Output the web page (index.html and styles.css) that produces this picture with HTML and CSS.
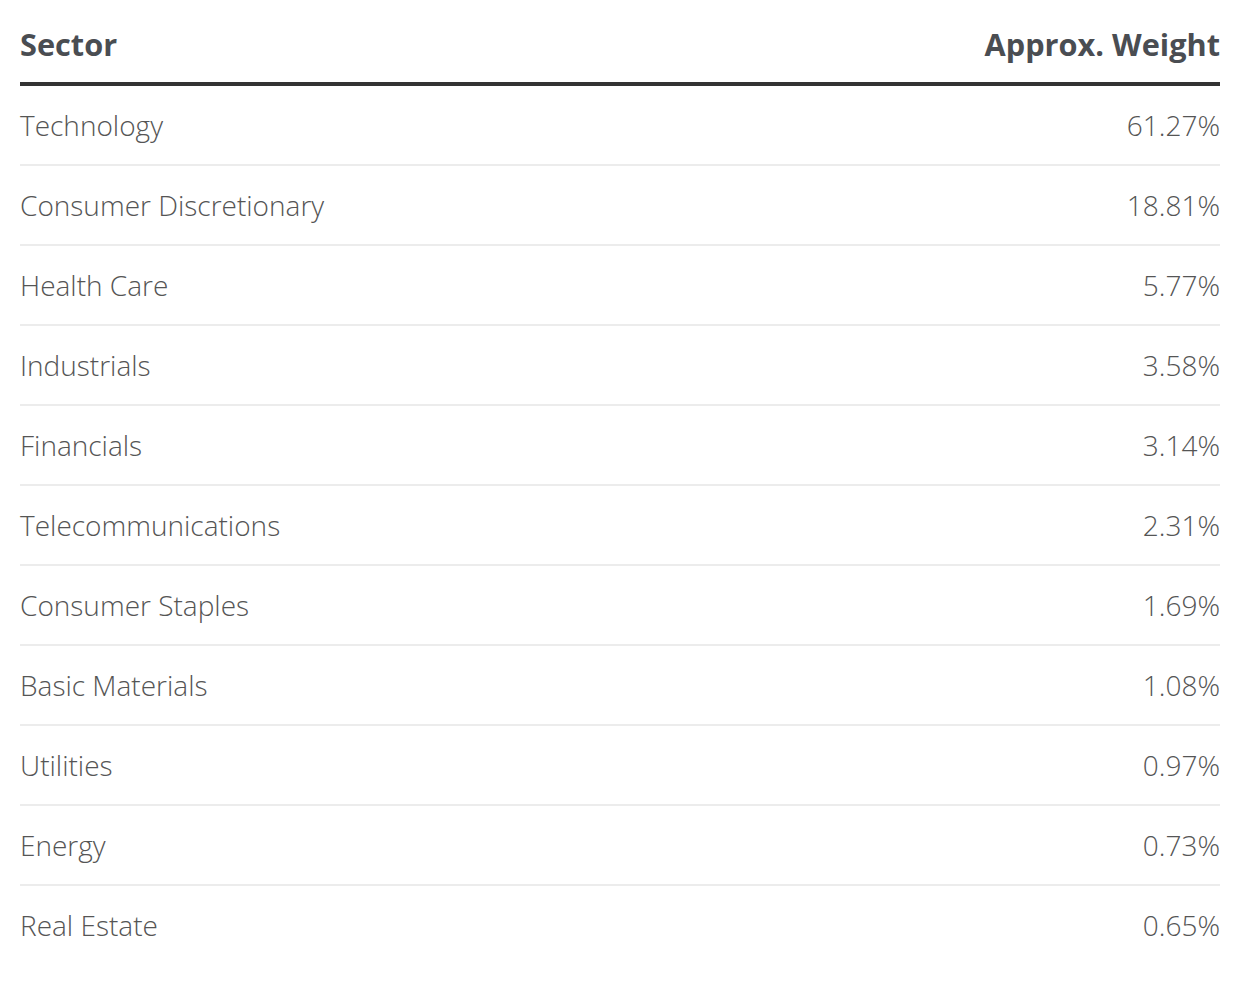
FILE: index.html
```html
<!DOCTYPE html>
<html>
<head>
<meta charset="utf-8">
<link rel="stylesheet" href="styles.css">
</head>
<body>
<div class="wrap">
  <table class="sectors">
    <thead>
      <tr><th class="name">Sector</th><th class="val">Approx. Weight</th></tr>
    </thead>
    <tbody>
      <tr><td class="name">Technology</td><td class="val">61.27%</td></tr>
      <tr><td class="name">Consumer Discretionary</td><td class="val">18.81%</td></tr>
      <tr><td class="name">Health Care</td><td class="val">5.77%</td></tr>
      <tr><td class="name">Industrials</td><td class="val">3.58%</td></tr>
      <tr><td class="name">Financials</td><td class="val">3.14%</td></tr>
      <tr><td class="name">Telecommunications</td><td class="val">2.31%</td></tr>
      <tr><td class="name">Consumer Staples</td><td class="val">1.69%</td></tr>
      <tr><td class="name">Basic Materials</td><td class="val">1.08%</td></tr>
      <tr><td class="name">Utilities</td><td class="val">0.97%</td></tr>
      <tr><td class="name">Energy</td><td class="val">0.73%</td></tr>
      <tr><td class="name">Real Estate</td><td class="val">0.65%</td></tr>
    </tbody>
  </table>
</div>
</body>
</html>
```
FILE: styles.css
```css
html, body {
  margin: 0;
  padding: 0;
  background: #fff;
}
.wrap {
  padding: 0 20px;
  font-family: "Open Sans", "Liberation Sans", sans-serif;
}
.sectors {
  width: 100%;
  border-collapse: collapse;
}
.sectors th {
  font-weight: 700;
  font-size: 30.7px;
  line-height: 42px;
  color: #4a4d52;
  padding: 23px 0 17px;
  border-bottom: 4px solid #333;
}
.sectors td {
  font-weight: 300;
  font-size: 28px;
  line-height: 42px;
  color: #555;
  height: 78px;
  padding: 0;
  border-bottom: 2px solid #ececec;
}
.sectors tbody tr:last-child td {
  border-bottom: none;
}
.name { text-align: left; }
.val { text-align: right; }
```
